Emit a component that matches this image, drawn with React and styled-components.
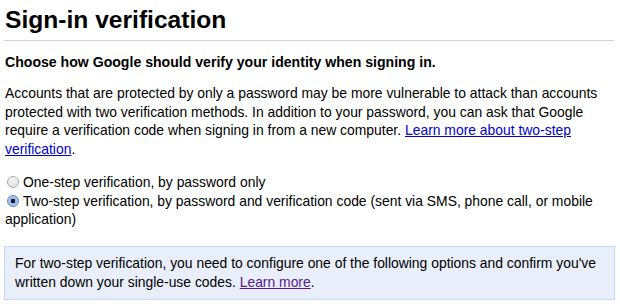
import React from 'react';
import styled, { createGlobalStyle } from 'styled-components';

const Global = createGlobalStyle`
  body {
    margin: 0;
    background: #fff;
    font-family: "Liberation Sans", Arial, sans-serif;
    color: #000;
  }
`;

const Page = styled.div`
  width: 610px;
  padding: 0 0 0 4px;
`;

const Title = styled.h1`
  margin: 0;
  padding: 5px 0 0 1px;
  font-size: 24.6px;
  font-weight: bold;
  line-height: 30px;
`;

const Rule = styled.hr`
  margin: 5px 0 0;
  border: 0;
  border-top: 1px solid #d3d3d3;
  height: 0;
`;

const Lead = styled.p`
  margin: 12px 0 0 1px;
  font-size: 14.1px;
  font-weight: bold;
  line-height: 18px;
`;

const Text = styled.p`
  margin: 13px 0 0 1px;
  font-size: 13.9px;
  line-height: 18.7px;
`;

const Link = styled.a`
  color: ${p => (p.$visited ? '#551a8b' : '#0000cc')};
  text-decoration: underline;
`;

const Options = styled.div`
  margin: 14px 0 0 1px;
  display: flex;
  flex-direction: column;
`;

const Option = styled.label`
  display: block;
  font-size: 13.9px;
  line-height: 18.7px;
  padding-left: 17px;
  text-indent: -17px;
`;

const Radio = styled.span`
  display: inline-block;
  box-sizing: border-box;
  width: 12px;
  height: 12px;
  margin: 0 4px 0 2px;
  vertical-align: -1px;
  text-indent: 0;
  border-radius: 50%;
  border: 1px solid ${p => (p.$checked ? '#5f87c4' : '#a9a9a9')};
  background: ${p =>
    p.$checked
      ? 'radial-gradient(circle, #1a1a1a 0 2px, #8fb8ec 2.5px, #c5dcf7 100%)'
      : 'linear-gradient(#f4f4f4, #e2e2e2)'};
`;

const Wrap = styled.span`
  display: block;
  margin-left: -17px;
  text-indent: 0;
`;

const Notice = styled.div`
  margin: 17px 0 0;
  box-sizing: border-box;
  width: 611px;
  padding: 7px 10px 8px;
  background: #e8eefa;
  border: 1px solid #c3d9ff;
  font-size: 13.9px;
  line-height: 18.7px;
`;

export default function App() {
  return (
    <Page>
      <Global />
      <Title>Sign-in verification</Title>
      <Rule />
      <Lead>Choose how Google should verify your identity when signing in.</Lead>
      <Text>
        Accounts that are protected by only a password may be more vulnerable to attack than accounts
        protected with two verification methods. In addition to your password, you can ask that Google
        require a verification code when signing in from a new computer.{' '}
        <Link href="#">Learn more about two-step verification</Link>.
      </Text>
      <Options>
        <Option>
          <Radio />One-step verification, by password only
        </Option>
        <Option>
          <Radio $checked />Two-step verification, by password and verification code (sent via SMS, phone call, or mobile
          <Wrap>application)</Wrap>
        </Option>
      </Options>
      <Notice>
        For two-step verification, you need to configure one of the following options and confirm you've
        written down your single-use codes. <Link href="#" $visited>Learn more</Link>.
      </Notice>
    </Page>
  );
}
